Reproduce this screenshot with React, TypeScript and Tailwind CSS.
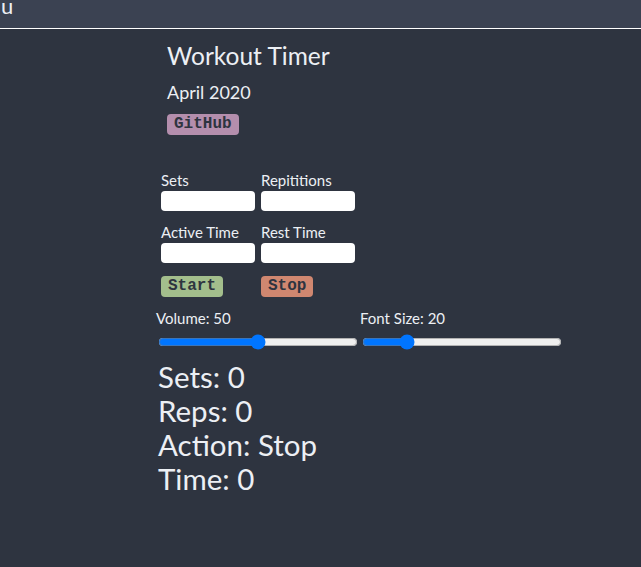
import React from "react";

export default function App() {
  const sans = { fontFamily: "Lato, 'Noto Sans', sans-serif" };
  const inputCls = "block w-[94px] h-[20px] bg-white rounded-[4px] text-black";
  const btnCls =
    "block h-[21px] px-[7px] rounded-[4px] text-[#2e3440] font-bold text-[16px] leading-[21px] font-['Liberation_Mono',monospace]";
  return (
    <div className="min-h-[567px] w-full bg-[#2e3440] text-[#eceff4]" style={sans}>
      <div className="h-[29px] bg-[#3b4252] border-b border-white overflow-hidden">
        <div className="text-[22px] leading-[22px] -mt-[5px] pl-[1px]">u</div>
      </div>
      <div className="pl-[156px] pt-[12px]">
        <div className="pl-[11px]">
          <h1 className="text-[24.5px] leading-[30px]">Workout Timer</h1>
          <div className="mt-[9px] text-[18px] leading-[24px]">April 2020</div>
          <button className={btnCls + " mt-[10px] h-[20px] leading-[20px] bg-[#b48ead]"}>GitHub</button>
        </div>
        <div className="pl-[5px] mt-[34px] grid grid-cols-[94px_94px] gap-x-[6px]">
          <div>
            <div className="text-[15px] leading-[22px]">Sets</div>
            <input className={inputCls} />
          </div>
          <div>
            <div className="text-[15px] leading-[22px]">Repititions</div>
            <input className={inputCls} />
          </div>
          <div className="mt-[10px]">
            <div className="text-[15px] leading-[22px]">Active Time</div>
            <input className={inputCls} />
          </div>
          <div className="mt-[10px]">
            <div className="text-[15px] leading-[22px]">Rest Time</div>
            <input className={inputCls} />
          </div>
          <div className="mt-[13px]">
            <button className={btnCls + " bg-[#a3be8c]"}>Start</button>
          </div>
          <div className="mt-[13px]">
            <button className={btnCls + " bg-[#d08770]"}>Stop</button>
          </div>
        </div>
        <div className="mt-[12px] flex">
          <div className="w-[204px]">
            <div className="text-[15px] leading-[18px]">Volume: 50</div>
            <input type="range" min={0} max={100} defaultValue={50} className="w-[200px] ml-[2px] mt-[7px] block" />
          </div>
          <div className="w-[204px]">
            <div className="text-[15px] leading-[18px]">Font Size: 20</div>
            <input type="range" min={0} max={100} defaultValue={20} className="w-[200px] ml-[2px] mt-[7px] block" />
          </div>
        </div>
        <div className="pl-[2px] mt-[10px] text-[29.5px] leading-[34px]">
          <div>Sets: 0</div>
          <div>Reps: 0</div>
          <div>Action: Stop</div>
          <div>Time: 0</div>
        </div>
      </div>
    </div>
  );
}
